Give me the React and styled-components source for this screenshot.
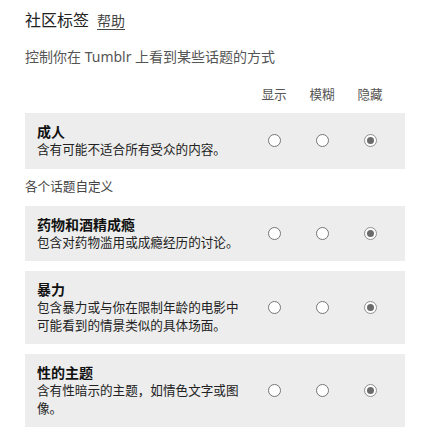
import React from "react";
import styled, { createGlobalStyle } from "styled-components";

const GlobalStyle = createGlobalStyle`
  body {
    margin: 0;
    background: #fff;
    font-family: "Noto Sans", "Noto Sans CJK SC", sans-serif;
  }
`;

const topics = [
  {
    id: "drugs",
    title: "药物和酒精成瘾",
    desc: "包含对药物滥用或成瘾经历的讨论。",
  },
  {
    id: "violence",
    title: "暴力",
    desc: "包含暴力或与你在限制年龄的电影中可能看到的情景类似的具体场面。",
  },
  {
    id: "sexual",
    title: "性的主题",
    desc: "含有性暗示的主题，如情色文字或图像。",
  },
];

const options = ["show", "blur", "hide"];

const TopicRow = ({ id, title, desc }) => (
  <Panel>
    <TextCol>
      <TopicTitle>{title}</TopicTitle>
      <TopicDesc>{desc}</TopicDesc>
    </TextCol>
    {options.map((opt) => (
      <RadioCell key={opt}>
        <Radio
          type="radio"
          name={id}
          value={opt}
          defaultChecked={opt === "hide"}
        />
      </RadioCell>
    ))}
  </Panel>
);

export default function App() {
  return (
    <Page>
      <GlobalStyle />
      <TitleRow>
        <Title>社区标签</Title>
        <HelpLink href="#">帮助</HelpLink>
      </TitleRow>
      <Subtitle>控制你在 Tumblr 上看到某些话题的方式</Subtitle>
      <HeaderGrid>
        <span />
        <ColHead>显示</ColHead>
        <ColHead>模糊</ColHead>
        <ColHead>隐藏</ColHead>
      </HeaderGrid>
      <TopicRow
        id="adult"
        title="成人"
        desc="含有可能不适合所有受众的内容。"
      />
      <SectionLabel>各个话题自定义</SectionLabel>
      <List>
        {topics.map((t) => (
          <TopicRow key={t.id} {...t} />
        ))}
      </List>
    </Page>
  );
}

const Page = styled.div`
  padding: 9px 21px 20px 25px;
  width: 426px;
  box-sizing: border-box;
`;

const TitleRow = styled.div`
  display: flex;
  align-items: baseline;
  gap: 8px;
`;

const Title = styled.h1`
  margin: 0;
  font-size: 16px;
  font-weight: 400;
  line-height: 22px;
  color: #222;
`;

const HelpLink = styled.a`
  font-size: 14px;
  color: #444;
  text-decoration: underline;
  text-underline-offset: 3px;
`;

const Subtitle = styled.p`
  margin: 16px 0 0;
  font-size: 14px;
  line-height: 20px;
  color: #555;
`;

const HeaderGrid = styled.div`
  display: grid;
  grid-template-columns: 1fr 48px 48px 48px;
  padding-right: 11px;
  margin: 19px 0 9px;
`;

const ColHead = styled.span`
  text-align: center;
  font-size: 12.6px;
  line-height: 18px;
  color: #555;
`;

const Panel = styled.div`
  display: grid;
  grid-template-columns: 1fr 48px 48px 48px;
  align-items: center;
  padding: 10px 11px 10px 12px;
  background: #ededed;
`;

const TextCol = styled.div`
  display: flex;
  flex-direction: column;
`;

const TopicTitle = styled.div`
  font-size: 14px;
  font-weight: 700;
  line-height: 18px;
  color: #111;
`;

const TopicDesc = styled.div`
  max-width: 208px;
  font-size: 12.6px;
  line-height: 17.5px;
  color: #222;
`;

const RadioCell = styled.div`
  display: flex;
  justify-content: center;
`;

const Radio = styled.input`
  appearance: none;
  margin: 0;
  width: 13px;
  height: 13px;
  border-radius: 50%;
  border: 1px solid #767676;
  background: #fff;
  box-sizing: border-box;
  display: grid;
  place-items: center;

  &:checked {
    border-color: #8f8f8f;
  }

  &:checked::after {
    content: "";
    width: 7px;
    height: 7px;
    border-radius: 50%;
    background: #6b6b6b;
  }
`;

const SectionLabel = styled.div`
  margin: 9px 0 10px;
  font-size: 12.6px;
  line-height: 18px;
  color: #444;
`;

const List = styled.div`
  display: flex;
  flex-direction: column;
  gap: 10px;
`;
